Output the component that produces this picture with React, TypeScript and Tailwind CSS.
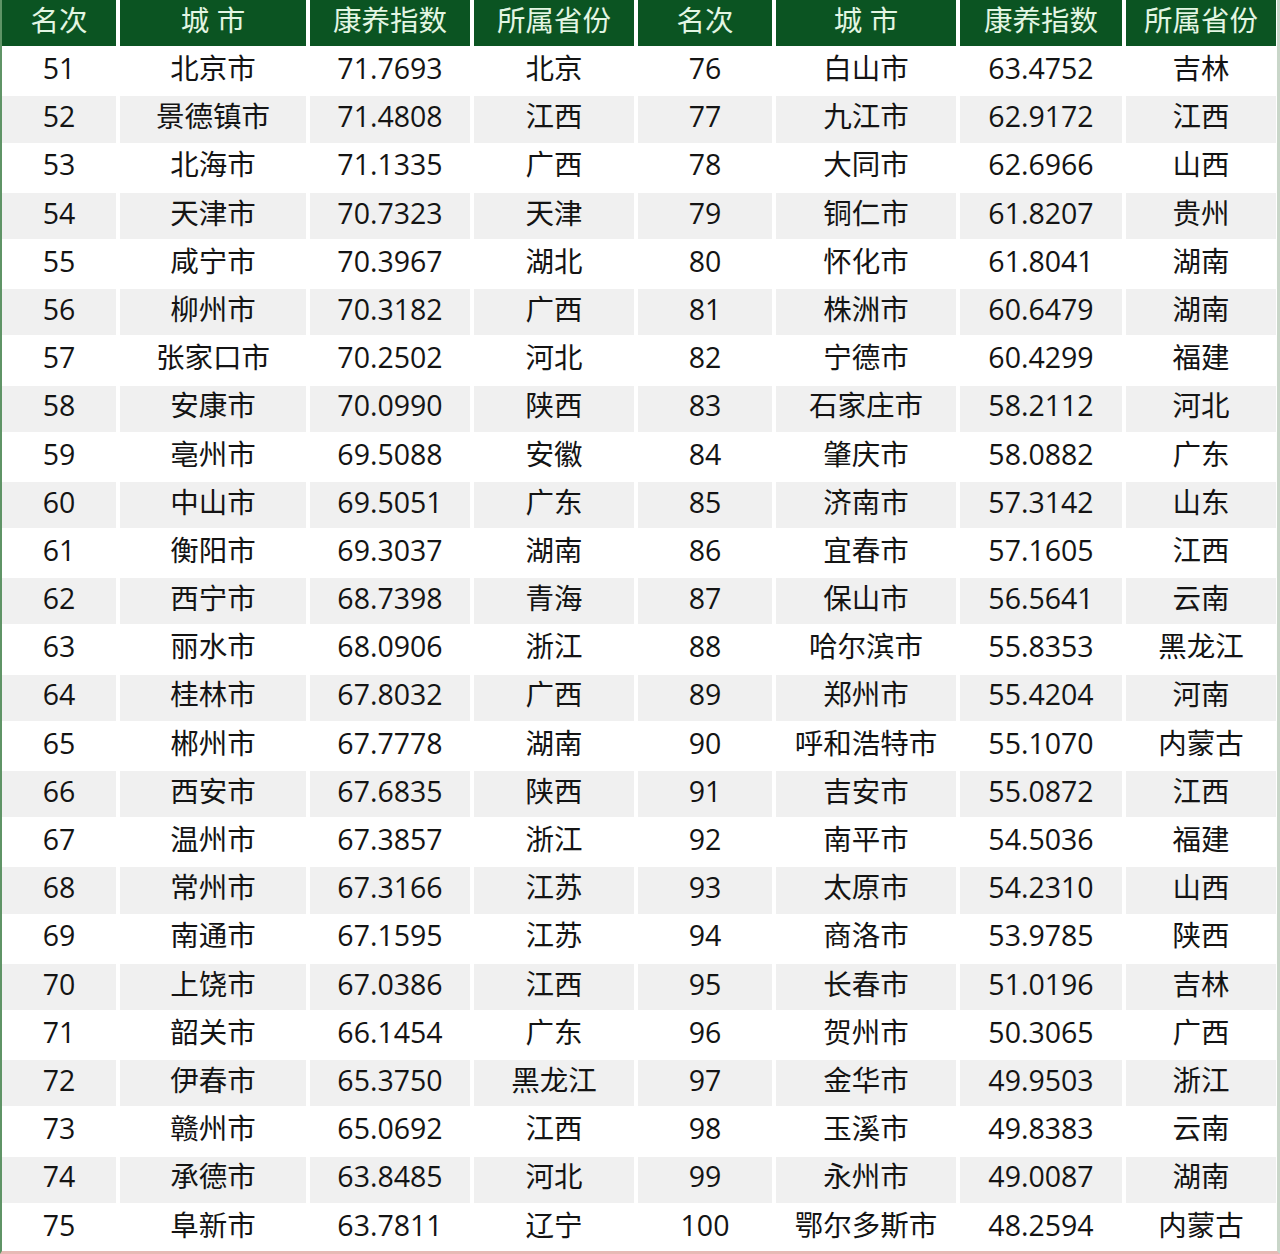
import React from "react";

type Row = [string, string, string, string];

const left: Row[] = [
  ["51", "北京市", "71.7693", "北京"],
  ["52", "景德镇市", "71.4808", "江西"],
  ["53", "北海市", "71.1335", "广西"],
  ["54", "天津市", "70.7323", "天津"],
  ["55", "咸宁市", "70.3967", "湖北"],
  ["56", "柳州市", "70.3182", "广西"],
  ["57", "张家口市", "70.2502", "河北"],
  ["58", "安康市", "70.0990", "陕西"],
  ["59", "亳州市", "69.5088", "安徽"],
  ["60", "中山市", "69.5051", "广东"],
  ["61", "衡阳市", "69.3037", "湖南"],
  ["62", "西宁市", "68.7398", "青海"],
  ["63", "丽水市", "68.0906", "浙江"],
  ["64", "桂林市", "67.8032", "广西"],
  ["65", "郴州市", "67.7778", "湖南"],
  ["66", "西安市", "67.6835", "陕西"],
  ["67", "温州市", "67.3857", "浙江"],
  ["68", "常州市", "67.3166", "江苏"],
  ["69", "南通市", "67.1595", "江苏"],
  ["70", "上饶市", "67.0386", "江西"],
  ["71", "韶关市", "66.1454", "广东"],
  ["72", "伊春市", "65.3750", "黑龙江"],
  ["73", "赣州市", "65.0692", "江西"],
  ["74", "承德市", "63.8485", "河北"],
  ["75", "阜新市", "63.7811", "辽宁"],
];

const right: Row[] = [
  ["76", "白山市", "63.4752", "吉林"],
  ["77", "九江市", "62.9172", "江西"],
  ["78", "大同市", "62.6966", "山西"],
  ["79", "铜仁市", "61.8207", "贵州"],
  ["80", "怀化市", "61.8041", "湖南"],
  ["81", "株洲市", "60.6479", "湖南"],
  ["82", "宁德市", "60.4299", "福建"],
  ["83", "石家庄市", "58.2112", "河北"],
  ["84", "肇庆市", "58.0882", "广东"],
  ["85", "济南市", "57.3142", "山东"],
  ["86", "宜春市", "57.1605", "江西"],
  ["87", "保山市", "56.5641", "云南"],
  ["88", "哈尔滨市", "55.8353", "黑龙江"],
  ["89", "郑州市", "55.4204", "河南"],
  ["90", "呼和浩特市", "55.1070", "内蒙古"],
  ["91", "吉安市", "55.0872", "江西"],
  ["92", "南平市", "54.5036", "福建"],
  ["93", "太原市", "54.2310", "山西"],
  ["94", "商洛市", "53.9785", "陕西"],
  ["95", "长春市", "51.0196", "吉林"],
  ["96", "贺州市", "50.3065", "广西"],
  ["97", "金华市", "49.9503", "浙江"],
  ["98", "玉溪市", "49.8383", "云南"],
  ["99", "永州市", "49.0087", "湖南"],
  ["100", "鄂尔多斯市", "48.2594", "内蒙古"],
];

const headers = ["名次", "城 市", "康养指数", "所属省份", "名次", "城 市", "康养指数", "所属省份"];

const font = {
  fontFamily: '"Open Sans", "Noto Sans CJK SC", sans-serif',
};

export default function App() {
  return (
    <div
      className="w-[1280px] h-[1254px] bg-white border-l-[2px] border-r-[3px] border-b-[3px] border-l-[#5f9466] border-r-[#c9d6c9] border-b-[#e7b9b5] overflow-hidden"
      style={font}
    >
      <div className="grid grid-cols-[114px_186px_160px_160px_134px_180px_162px_150px] gap-x-[4px] gap-y-[2px] auto-rows-[46.2px]">
        {headers.map((h, i) => (
          <div
            key={"h" + i}
            className="h-[46px] bg-[#0b5422] text-[#e3f6e3] text-[28.5px] flex items-center justify-center leading-none pb-[6px] whitespace-pre"
          >
            {h}
          </div>
        ))}
        {left.map((row, r) => {
          const cells = [...row, ...right[r]];
          const bg = r % 2 === 1 ? "bg-[#f0f0f0]" : "bg-white";
          return cells.map((c, i) => (
            <div
              key={r + "-" + i}
              className={`${bg} text-[#141414] text-[28.5px] flex items-center justify-center leading-none pb-[6px]`}
            >
              {c}
            </div>
          ));
        })}
      </div>
    </div>
  );
}
